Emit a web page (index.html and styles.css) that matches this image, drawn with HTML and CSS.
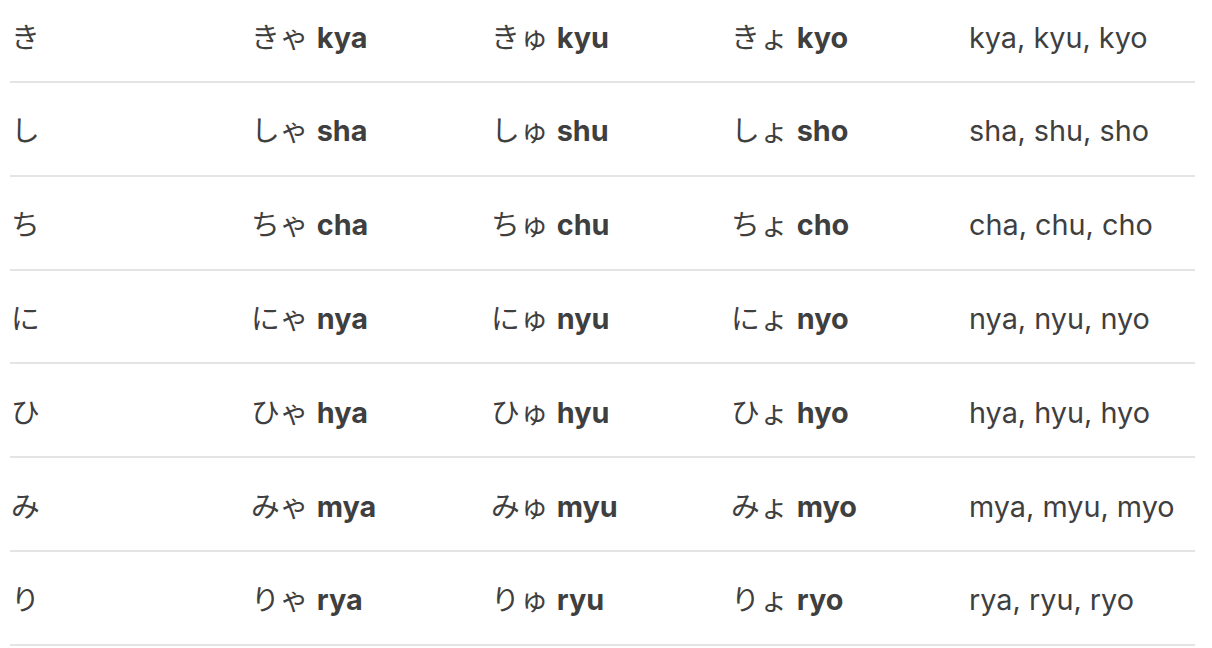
FILE: index.html
```html
<!DOCTYPE html>
<html lang="ja">
<head>
<meta charset="utf-8">
<title>Yōon</title>
<link rel="stylesheet" href="styles.css">
</head>
<body>
<table class="yoon">
  <colgroup>
    <col class="c1"><col class="c2"><col class="c3"><col class="c4"><col class="c5">
  </colgroup>
  <tbody>
    <tr><td>き</td><td>きゃ <b>kya</b></td><td>きゅ <b>kyu</b></td><td>きょ <b>kyo</b></td><td>kya, kyu, kyo</td></tr>
    <tr><td>し</td><td>しゃ <b>sha</b></td><td>しゅ <b>shu</b></td><td>しょ <b>sho</b></td><td>sha, shu, sho</td></tr>
    <tr><td>ち</td><td>ちゃ <b>cha</b></td><td>ちゅ <b>chu</b></td><td>ちょ <b>cho</b></td><td>cha, chu, cho</td></tr>
    <tr><td>に</td><td>にゃ <b>nya</b></td><td>にゅ <b>nyu</b></td><td>にょ <b>nyo</b></td><td>nya, nyu, nyo</td></tr>
    <tr><td>ひ</td><td>ひゃ <b>hya</b></td><td>ひゅ <b>hyu</b></td><td>ひょ <b>hyo</b></td><td>hya, hyu, hyo</td></tr>
    <tr><td>み</td><td>みゃ <b>mya</b></td><td>みゅ <b>myu</b></td><td>みょ <b>myo</b></td><td>mya, myu, myo</td></tr>
    <tr><td>り</td><td>りゃ <b>rya</b></td><td>りゅ <b>ryu</b></td><td>りょ <b>ryo</b></td><td>rya, ryu, ryo</td></tr>
  </tbody>
</table>
</body>
</html>
```
FILE: styles.css
```css
html, body {
  margin: 0;
  padding: 0;
  background: #ffffff;
}

body {
  font-family: Inter, "Noto Sans CJK JP", sans-serif;
  font-size: 28.8px;
  color: #3f3f3f;
}

.yoon {
  border-collapse: collapse;
  margin: -10.8px 0 0 10px;
  width: 1185px;
  table-layout: fixed;
}

.yoon .c1, .yoon .c2, .yoon .c3 { width: 240px; }
.yoon .c4 { width: 238px; }

.yoon td {
  padding: 27.4px 0 22.4px 1px;
  line-height: 42px;
  border-bottom: 2px solid #e4e4e4;
  white-space: nowrap;
  vertical-align: middle;
}

.yoon b {
  font-weight: 700;
}
```
